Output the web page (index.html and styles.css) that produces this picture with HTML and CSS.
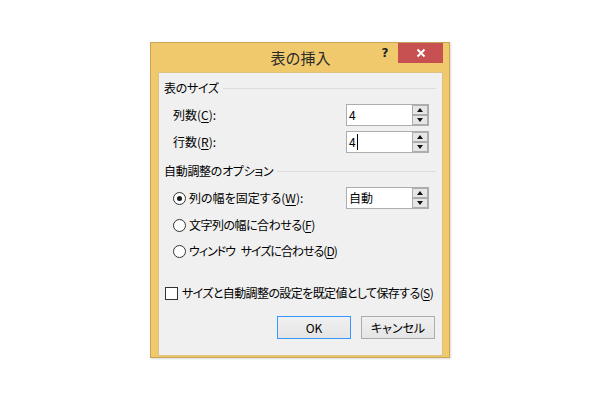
FILE: index.html
```html
<!DOCTYPE html>
<html lang="ja">
<head>
<meta charset="utf-8">
<title>表の挿入</title>
<link rel="stylesheet" href="styles.css">
</head>
<body>
<div class="dialog">
  <div class="titlebar">
    <div></div>
    <div class="title">表の挿入</div>
    <div class="controls">
      <div class="help">?</div>
      <div class="close"><svg width="10" height="10" viewBox="0 0 10 10"><path d="M1.5 1.5 L8.5 8.5 M8.5 1.5 L1.5 8.5" stroke="#fff" stroke-width="2" fill="none"/></svg></div>
    </div>
  </div>
  <div class="panel">
    <div class="group-head"><span class="tight">表のサイズ</span><div class="rule"></div></div>
    <div class="row r-cols"><span class="label">列数(<u>C</u>):</span>
      <div class="spin"><div class="value">4</div><div class="arrows"><div class="ab"><i class="up"></i></div><div class="ab"><i class="down"></i></div></div></div>
    </div>
    <div class="row r-rows"><span class="label">行数(<u>R</u>):</span>
      <div class="spin"><div class="value">4<span class="caret"></span></div><div class="arrows"><div class="ab"><i class="up"></i></div><div class="ab"><i class="down"></i></div></div></div>
    </div>
    <div class="group-head g2"><span class="tight">自動調整のオプション</span><div class="rule"></div></div>
    <div class="row r-opt1"><span class="opt"><span class="radio checked"></span><span class="txt">列の幅を固定する(<u>W</u>):</span></span>
      <div class="spin"><div class="value">自動</div><div class="arrows"><div class="ab"><i class="up"></i></div><div class="ab"><i class="down"></i></div></div></div>
    </div>
    <div class="row r-opt2"><span class="opt"><span class="radio"></span><span class="txt t2">文字列の幅に合わせる(<u>F</u>)</span></span></div>
    <div class="row r-opt3"><span class="opt"><span class="radio"></span><span class="txt t3">ウィンドウ サイズに合わせる(<u>D</u>)</span></span></div>
    <div class="row r-check"><span class="opt"><span class="checkbox"></span><span class="txt t4">サイズと自動調整の設定を既定値として保存する(<u>S</u>)</span></span></div>
    <div class="buttons">
      <div class="btn default">OK</div>
      <div class="btn">キャンセル</div>
    </div>
  </div>
</div>
</body>
</html>
```
FILE: styles.css
```css
html, body {
  margin: 0;
  padding: 0;
  background: #ffffff;
}
body {
  width: 600px;
  height: 400px;
  display: flex;
  align-items: center;
  justify-content: center;
  font-family: "Noto Sans CJK JP", "Noto Sans", sans-serif;
  font-size: 12px;
  color: #000;
}
.dialog {
  box-sizing: border-box;
  width: 300px;
  height: 316px;
  background: #f1c96d;
  border: 1px solid #c8a457;
  padding: 0 6px 1px 7px;
  display: flex;
  flex-direction: column;
  box-shadow: 1px 1px 2px rgba(0,0,0,0.15);
}
.titlebar {
  height: 29px;
  display: grid;
  grid-template-columns: 1fr auto 1fr;
  align-items: start;
}
.title {
  font-size: 15px;
  line-height: 29px;
  color: #2b2b2b;
}
.controls {
  display: flex;
  justify-content: flex-end;
  align-items: flex-start;
}
.help {
  width: 26px;
  height: 20px;
  font-family: "DejaVu Sans", sans-serif;
  font-weight: bold;
  font-size: 12px;
  line-height: 17px;
  padding-top: 2px;
  box-sizing: border-box;
  text-align: center;
  color: #222;
}
.close {
  width: 45px;
  height: 20px;
  background: #c75050;
  display: flex;
  align-items: center;
  justify-content: center;
}
.panel {
  flex: 1;
  background: #f0f0f0;
  border: 1px solid #dcc384;
  padding: 6px 6px 0 5px;
  font-feature-settings: "palt";
}
.group-head {
  height: 18px;
  display: flex;
  align-items: center;
  line-height: 16px;
  white-space: nowrap;
}
.group-head.g2 { margin-top: 9px; }
.tight { letter-spacing: -0.3px; }
.rule {
  flex: 1;
  height: 1px;
  background: #dcdcdc;
  margin-left: 4px;
}
.row {
  display: flex;
  align-items: center;
  justify-content: space-between;
  padding: 0 7px 0 9px;
  height: 20px;
  line-height: 16px;
  white-space: nowrap;
}
.r-cols { margin-top: 7px; height: 22px; }
.r-rows { margin-top: 5px; height: 22px; }
.r-opt1 { margin-top: 7px; height: 22px; }
.r-opt2 { margin-top: 6px; }
.r-opt3 { margin-top: 6px; }
.r-check { margin-top: 22px; padding-left: 1px; padding-right: 0; }
.t2 { letter-spacing: -0.5px; }
.t3 { letter-spacing: -1px; word-spacing: 4px; }
.t4 { letter-spacing: -0.6px; }
u {
  text-underline-offset: 2px;
}
.spin {
  box-sizing: border-box;
  width: 83px;
  height: 22px;
  border: 1px solid #abadb3;
  background: #fff;
  display: flex;
}
.value {
  flex: 1;
  padding-left: 2px;
  line-height: 20px;
  display: flex;
  align-items: center;
}
.caret {
  display: inline-block;
  width: 1px;
  height: 16px;
  background: #000;
  margin-left: 1px;
}
.arrows {
  width: 16px;
  display: flex;
  flex-direction: column;
}
.ab {
  box-sizing: border-box;
  height: 10px;
  background: #e6e6e6;
  border: 1px solid #adadad;
  display: flex;
  align-items: center;
  justify-content: center;
}
.ab i {
  width: 0;
  height: 0;
  border-left: 3.5px solid transparent;
  border-right: 3.5px solid transparent;
}
.ab i.up { border-bottom: 4px solid #111; }
.ab i.down { border-top: 4px solid #111; }
.opt {
  display: flex;
  align-items: center;
}
.radio {
  box-sizing: border-box;
  width: 13px;
  height: 13px;
  border: 1px solid #333;
  border-radius: 50%;
  background: #fff;
  margin-right: 3px;
  display: flex;
  align-items: center;
  justify-content: center;
}
.radio.checked::after {
  content: "";
  width: 5px;
  height: 5px;
  border-radius: 50%;
  background: #1a1a1a;
}
.checkbox {
  box-sizing: border-box;
  width: 13px;
  height: 13px;
  border: 1px solid #333;
  background: #fff;
  margin-right: 4px;
}
.buttons {
  margin-top: 13px;
  display: flex;
  justify-content: flex-end;
  gap: 10px;
  padding-right: 1px;
}
.btn {
  box-sizing: border-box;
  width: 74px;
  height: 23px;
  border: 1px solid #acacac;
  background: linear-gradient(#f0f0f0, #e5e5e5);
  display: flex;
  align-items: center;
  justify-content: center;
  line-height: 16px;
}
.btn.default {
  border-color: #3399ff;
}
```
